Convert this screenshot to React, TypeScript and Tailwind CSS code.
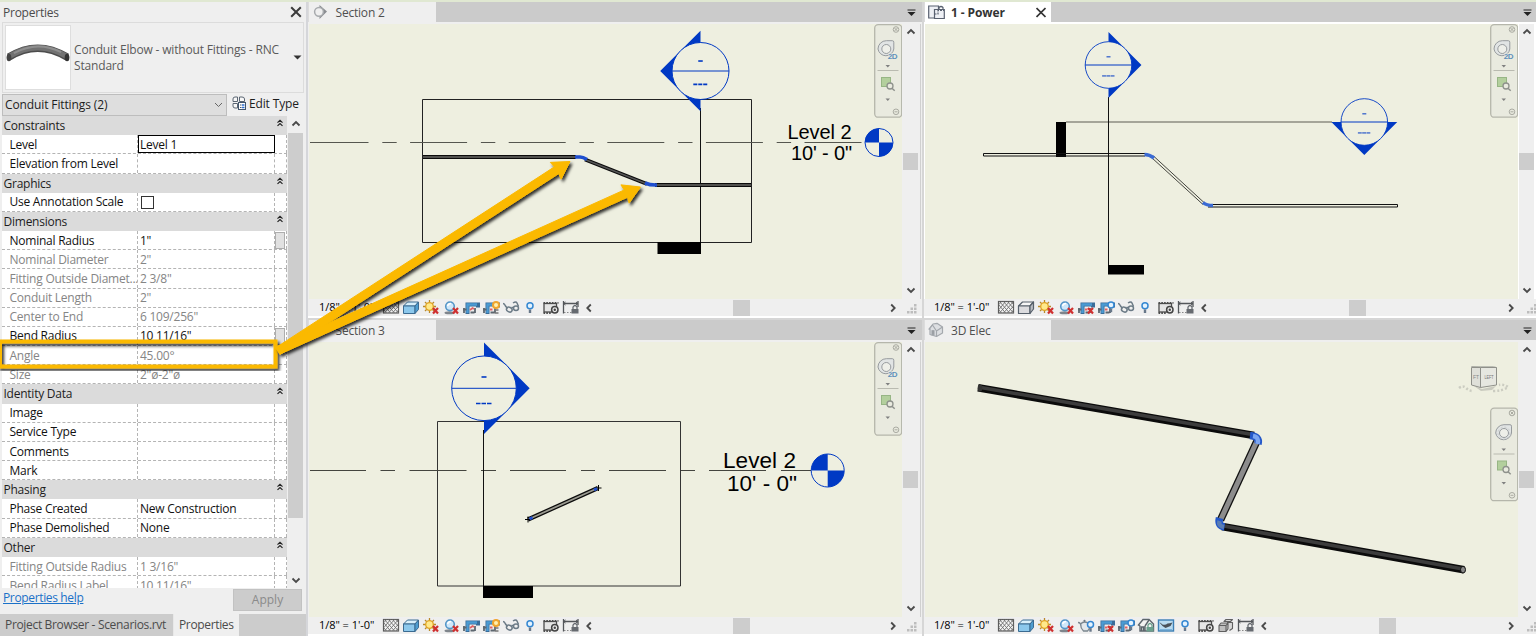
import React from "react";

type Dir = "left" | "right" | "down";
const BLUE = "#0039c4";
const PAPER = "#eeefe0";

/* ---------- property palette ---------- */

type Row =
  | { kind: "group"; name: string }
  | { kind: "prop"; name: string; value?: string; dim?: boolean; button?: boolean; check?: boolean; active?: boolean };

const rows: Row[] = [
  { kind: "group", name: "Constraints" },
  { kind: "prop", name: "Level", value: "Level 1", active: true },
  { kind: "prop", name: "Elevation from Level" },
  { kind: "group", name: "Graphics" },
  { kind: "prop", name: "Use Annotation Scale", check: true },
  { kind: "group", name: "Dimensions" },
  { kind: "prop", name: "Nominal Radius", value: '1"', button: true },
  { kind: "prop", name: "Nominal Diameter", value: '2"', dim: true },
  { kind: "prop", name: "Fitting Outside Diamet...", value: '2 3/8"', dim: true },
  { kind: "prop", name: "Conduit Length", value: '2"', dim: true },
  { kind: "prop", name: "Center to End", value: '6 109/256"', dim: true },
  { kind: "prop", name: "Bend Radius", value: '10 11/16"', button: true },
  { kind: "prop", name: "Angle", value: "45.00°", dim: true },
  { kind: "prop", name: "Size", value: '2"ø-2"ø', dim: true },
  { kind: "group", name: "Identity Data" },
  { kind: "prop", name: "Image" },
  { kind: "prop", name: "Service Type" },
  { kind: "prop", name: "Comments" },
  { kind: "prop", name: "Mark" },
  { kind: "group", name: "Phasing" },
  { kind: "prop", name: "Phase Created", value: "New Construction" },
  { kind: "prop", name: "Phase Demolished", value: "None" },
  { kind: "group", name: "Other" },
  { kind: "prop", name: "Fitting Outside Radius", value: '1 3/16"', dim: true },
  { kind: "prop", name: "Bend Radius Label", value: '10 11/16"', dim: true },
];

function Chevron({ d, className = "" }: { d: "up" | "down" | "left" | "right"; className?: string }) {
  const path = {
    up: "M1.5 6.5 5 3l3.5 3.5",
    down: "M1.5 3.5 5 7l3.5-3.5",
    left: "M6.8 1.5 3.3 5l3.5 3.5",
    right: "M3.2 1.5 6.7 5 3.2 8.5",
  }[d];
  return (
    <svg width="10" height="10" viewBox="0 0 10 10" className={"shrink-0 " + className}>
      <path d={path} fill="none" stroke="#4a4a4a" strokeWidth="1.8" />
    </svg>
  );
}

function PropertyRow({ row }: { row: Row }) {
  if (row.kind === "group") {
    return (
      <div className="flex h-[19.18px] shrink-0 items-center justify-between bg-[#dbdbdb] pl-[1.5px] pr-[3.5px] text-[#1d1d1d]">
        <span className="pt-px">{row.name}</span>
        <svg width="8" height="8" viewBox="0 0 8 8" className="mb-[5px]">
          <path d="M1.5 3.6 4 1.3l2.500 2.300M1.500 6.900 4 4.600 6.500 6.900" fill="none" stroke="#222" strokeWidth="1.200" />
        </svg>
      </div>
    );
  }
  const tone = row.dim ? "text-[#858585]" : "text-[#111111]";
  return (
    <div className={"flex h-[19.18px] shrink-0 border-b border-dashed border-[#b4b4b4] bg-white " + tone}>
      <div className="flex w-[136px] items-center overflow-hidden border-r border-dashed border-[#b4b4b4] pl-[7.5px] pt-px">{row.name}</div>
      <div
        className={
          "flex w-[137px] items-center pt-px " + (row.active ? "border border-black pl-px" : "border-r border-dashed border-[#b4b4b4] pl-[2px]")
        }
      >
        {row.check ? <span className="ml-[0.5px] size-[13px] border border-[#333] bg-white" /> : row.value}
      </div>
      <div className="flex flex-1 border-r border-dashed border-[#b4b4b4]">
        {row.button && <span className="mt-px h-[17px] w-[10px] border border-[#adadad] bg-[#e1e1e1]" />}
      </div>
    </div>
  );
}

function PropertiesPanel() {
  return (
    <aside className="flex w-[308px] shrink-0 flex-col border-r-2 border-[#d5d6da] bg-[#efefef] text-[12px] leading-[16px] tracking-[-0.24px] text-[#1d1d1d]">
      <div className="flex h-[20px] items-center justify-between pl-[3px] pr-[4px]">
        <span className="pt-px text-[#4b4b4b]">Properties</span>
        <svg width="12" height="12" viewBox="0 0 12 12">
          <path d="M1.2 1.2 10.8 10.8M10.8 1.2 1.2 10.8" stroke="#3c3c3c" strokeWidth="2" />
        </svg>
      </div>
      <div className="ml-[2px] mr-[2px] flex h-[71px] items-center border border-[#dcdcdc]">
        <div className="ml-[2px] flex h-[65px] w-[66px] items-center border border-[#dedede] bg-white">
          <svg width="65" height="63" viewBox="0 0 65 63">
            <path d="M3 31Q32 13 62 31" fill="none" stroke="#4c4c4c" strokeWidth="7.500" />
            <path d="M3 30.500Q32 12.500 62 30.500" fill="none" stroke="#727272" strokeWidth="5.500" />
            <path d="M8 27Q32 14 56 26" fill="none" stroke="#8f8f8f" strokeWidth="2" />
            <ellipse cx="3" cy="31.500" rx="2.400" ry="3.900" fill="#444" />
            <ellipse cx="62" cy="31.500" rx="2.400" ry="3.900" fill="#333" />
          </svg>
        </div>
        <div className="ml-[3px] flex-1 whitespace-nowrap pt-px tracking-[-0.17px] text-[#5a5a5a]">
          Conduit Elbow - without Fittings - RNC
          <br />
          Standard
        </div>
        <svg width="9" height="5" viewBox="0 0 9 5" className="mr-[1px]">
          <path d="M.5.5h8L4.5 4.5Z" fill="#333" />
        </svg>
      </div>
      <div className="flex h-[23px] items-center">
        <div className="ml-[2px] flex h-[22px] w-[225px] items-center justify-between border border-[#bdbdbd] bg-[#dedede] pl-[2px] pr-[3px]">
          <span className="tracking-[-0.12px]">Conduit Fittings (2)</span>
          <svg width="9" height="6" viewBox="0 0 9 6">
            <path d="M1 1l3.5 3.5L8 1" fill="none" stroke="#666" />
          </svg>
        </div>
        <svg width="14" height="14" viewBox="0 0 14 14" className="mb-[3px] ml-[5px] mr-[3px]">
          <g fill="#f7f7f7" stroke="#5b6673">
            <path d="M1 3q0-2 2-2h2.500v4.500H1ZM7.500 5.500V1h2.500q2.500 0 2.500 2v2.500ZM1 7.500h4.500V12H3q-2 0-2-2Z" />
          </g>
          <rect x="6.500" y="6.500" width="7" height="7" fill="#fff" stroke="#44566c" />
          <path d="M8 9h1.500M8 11.500h1.500" stroke="#44566c" />
          <path d="M10 9h2.500M10 11.500h2.500" stroke="#2e6fd0" strokeWidth="1.500" />
        </svg>
        <span className="mb-[2px] whitespace-nowrap tracking-[-0.15px]">Edit Type</span>
      </div>
      <div className="ml-[2px] flex h-[472px] shrink-0 overflow-hidden">
        <div className="flex h-full w-[285px] flex-col overflow-hidden whitespace-nowrap">
          {rows.map((r) => (
            <PropertyRow key={r.name} row={r} />
          ))}
        </div>
        <div className="ml-px flex w-[15px] flex-col items-center justify-between">
          <Chevron d="up" className="mt-[3px]" />
          <div className="mt-[4px] h-[385px] w-full bg-[#cdcdcd]" />
          <div className="flex-1" />
          <Chevron d="down" className="mb-[3px]" />
        </div>
      </div>
      <div className="flex h-[26px] shrink-0 items-start justify-between pl-[3px] pr-[4px]">
        <a className="mt-[2px] tracking-[-0.35px] text-[#1b71c8] underline">Properties help</a>
        <div className="mt-[1px] flex h-[22px] w-[69px] items-center justify-center border border-[#c2c2c2] bg-[#cccccc] tracking-normal text-[#8a8a8a]">
          Apply
        </div>
      </div>
      <div className="flex h-[22px] shrink-0 bg-[#cccccc] text-[#4b4b4b]">
        <div className="flex w-[174px] items-center whitespace-nowrap border-r border-[#e8e8e8] pl-[5px] tracking-[-0.33px]">
          Project Browser - Scenarios.rvt
        </div>
        <div className="flex w-[65px] items-center bg-[#efefef] pl-[5px] tracking-[-0.35px]">Properties</div>
      </div>
    </aside>
  );
}

/* ---------- view control bar icons ---------- */

const RedX = () => <path d="M11 8 16 13.500M16 8 11 13.500" stroke="#cf3030" strokeWidth="2.200" />;
const CropFrame = () => (
  <>
    <path d="M5.500 14V4.500H16v3" fill="none" stroke="#3a6d99" strokeWidth="4" />
    <path d="M5.500 13V4.500h9.500" fill="none" stroke="#4b9bd3" strokeWidth="2.400" />
    <path d="M1 9.500h3.500M2 8v5M8.500 12.500h4M13 8v5" fill="none" stroke="#5d6770" strokeWidth="1.800" />
  </>
);
const Bulb = ({ x, y }: { x: number; y: number }) => (
  <g>
    <circle cx={x} cy={y} r="3" fill="#e4f3ff" stroke="#3587d2" strokeWidth="1.500" />
    <path d={`M${x - 1.2} ${y + 3.6}h2.4v3.6h-2.4z`} fill="#68788a" />
  </g>
);
const Lock = ({ x, y, c }: { x: number; y: number; c: string }) => (
  <g>
    <path d={`M${x + 1.5} ${y}v-2q2-3 4 0v2`} fill="none" stroke={c} strokeWidth="1.300" />
    <rect x={x} y={y} width="7" height="4.500" fill={c} />
  </g>
);

const icons: Record<string, React.ReactNode> = {
  mesh: (
    <>
      <rect x="1.500" y="1.500" width="15" height="11.500" fill="#f4f4f4" stroke="#5b5b5b" strokeWidth="1.200" />
      <path
        d="M2 4.500l2.500-3M2 9.500l6.500-8M2.500 13l10-11.500M6.500 13l10-11.500M10.500 13l6-7M14 13l2.500-3M2 10l2.500 3M2 5l6.500 8M2.500 1.500l10 11.500M6.500 1.500l10 11.500M10.500 1.500l6 7M14 1.500l2.500 3"
        fill="none"
        stroke="#707070"
        strokeWidth=".9"
      />
    </>
  ),
  boxBlue: (
    <g strokeLinejoin="round" stroke="#3b6b91">
      <path d="M1.500 6 5.500 2h11L13 6Z" fill="#d9f0fb" />
      <path d="M1.500 6H13v7.500H1.500Z" fill="#8cc8ec" />
      <path d="M13 6l3.500-4v7.500L13 13.500Z" fill="#4e9dd0" />
    </g>
  ),
  boxGray: (
    <g strokeLinejoin="round" stroke="#56606b" strokeWidth="1.200">
      <path d="M1.500 6 5.500 2h11L13 6Z" fill="#f6f6f6" />
      <path d="M1.500 6H13v7.500H1.500Z" fill="#dcdcdf" />
      <path d="M13 6l3.500-4v7L13 13.500Z" fill="#b9bcc2" />
    </g>
  ),
  sun: (
    <>
      <path d="M7.500 0v13M1 6.500h13M3 2l9 9M12 2 3 11" stroke="#b98a2a" strokeWidth="1.300" />
      <circle cx="7.500" cy="6.500" r="3.800" fill="#ffe98a" stroke="#e0a325" strokeWidth="1.300" />
      <RedX />
    </>
  ),
  shadow: (
    <>
      <ellipse cx="7.500" cy="12.800" rx="5" ry="1.500" fill="#7f858c" />
      <circle cx="8" cy="6.300" r="4.300" fill="#cfe7fa" stroke="#5596c8" strokeWidth="1.600" />
      <path d="M5.500 6q1-2.500 3.500-2.500" stroke="#fff" strokeWidth="1.400" fill="none" />
      <RedX />
    </>
  ),
  crop: (
    <>
      <CropFrame />
      <path d="M8 10l2.500-2 1.500 1" fill="none" stroke="#e26161" strokeWidth="1.800" />
    </>
  ),
  cropX: (
    <>
      <CropFrame />
      <RedX />
      <path d="M8 9.500h2.500" stroke="#e26161" strokeWidth="2" />
    </>
  ),
  cropSun: (
    <>
      <CropFrame />
      <path d="M8 9.500h2.500" stroke="#e26161" strokeWidth="2" />
      <circle cx="14" cy="5" r="3" fill="#fff1b0" stroke="#f0a52e" strokeWidth="2" />
      <path d="M12.500 10h4M12.500 13h4" stroke="#777" strokeWidth="1.500" />
    </>
  ),
  cropBulb: (
    <>
      <CropFrame />
      <path d="M8 9.500h2.500" stroke="#e26161" strokeWidth="2" />
      <Bulb x={14} y={5} />
    </>
  ),
  glasses: (
    <g fill="none" stroke="#6b7a86" strokeWidth="1.500">
      <path d="M1 3.500q1.500 0 2.500 2.500l2 2.500M9.500 7.500l2.500 0M11 3q3-2 4 0l1.500 3.500" />
      <ellipse cx="7.300" cy="9.600" rx="2.900" ry="2.300" transform="rotate(25 7.300 9.600)" />
      <ellipse cx="14" cy="8.300" rx="2.500" ry="2.200" />
    </g>
  ),
  bulb: <Bulb x={8} y={5.8} />,
  film: (
    <>
      <rect x="2" y="3.500" width="12.500" height="8.500" fill="#e5e5e5" stroke="#4c4c4c" strokeWidth="1.300" />
      <path d="M1.500 2.800h15M1.500 13h8" stroke="#4c4c4c" strokeWidth="1.800" strokeDasharray="1.600 1.200" />
      <circle cx="12.800" cy="9.800" r="3.200" fill="#ececec" stroke="#444" strokeWidth="1.500" />
      <circle cx="12.800" cy="9.800" r="1.200" fill="#444" />
    </>
  ),
  dimLock: (
    <>
      <path d="M1.500 1v12.500M16 1v6M1.500 3.500H16" stroke="#53565a" strokeWidth="1.300" />
      <path d="M3.500 2 1.500 3.500l2 1.500M14 2l2 1.500L14 5" stroke="#53565a" fill="none" />
      <path d="M2 12.500h8" stroke="#888" strokeDasharray="1.500 1.500" />
      <Lock x={9.5} y={9} c="#666a70" />
    </>
  ),
  teapot: (
    <>
      <path d="M1 4.500q3 0 3 4M3.500 6q4-4 9 0 1 4-2 7H6.500q-3-3-3-7Z" fill="#e3e8eb" stroke="#7b878f" strokeWidth="1.300" />
      <circle cx="7.500" cy="2.800" r="1.100" fill="#6b7880" />
      <Bulb x={13.5} y={6.5} />
    </>
  ),
  houseLock: (
    <>
      <path d="M1.500 7 6 1.500h6L16.500 6v7H3V8Z" fill="#f2f2f2" stroke="#5c656c" strokeWidth="1.400" />
      <path d="M8 8l4-6M8 8v5M4.500 13V9h2v4" stroke="#5c656c" fill="none" strokeWidth="1.400" />
      <Lock x={9.5} y={9} c="#6aa08d" />
    </>
  ),
  picture: (
    <>
      <rect x="1.500" y="2" width="15" height="11" fill="#b9dcf2" stroke="#3c7fb5" strokeWidth="1.400" />
      <path d="M2.500 4.500q1 0 3 2 3 1 5-1 2 0 5-1l-2 3.500-5 2-3-2Z" fill="#4a525a" />
      <path d="M3 11.500h12" stroke="#7cb4dc" />
    </>
  ),
  blocks: (
    <g stroke="#606060" strokeWidth="1.100" strokeLinejoin="round">
      <path d="M7 3.500l2-2h6.500L13.500 3.500ZM10 4.500h5.500v6l-3 2" fill="#d8d8d8" />
      <path d="M2 7.500 4 5h7L9 7.500ZM2 7.500h7v6H2ZM9 7.500 11 5v6l-2 2.500Z" fill="#bfbfbf" />
    </g>
  ),
};

const sectionIcons = ["mesh", "boxBlue", "sun", "shadow", "crop", "cropSun", "glasses", "bulb", "film", "dimLock"];
const planIcons = ["mesh", "boxGray", "sun", "shadow", "cropX", "cropBulb", "glasses", "bulb", "film", "dimLock"];
const modelIcons = ["mesh", "boxBlue", "sun", "shadow", "teapot", "cropX", "cropBulb", "houseLock", "picture", "bulb", "film", "blocks", "dimLock"];

/* ---------- drawing symbols ---------- */

function SectionMark({ x, y, r, dir, len = 4.5 }: { x: number; y: number; r: number; dir: Dir; len?: number }) {
  const R = r * Math.SQRT2;
  const angle = { left: 0, right: 180, down: -90 }[dir];
  const big = r > 25;
  return (
    <g>
      <g transform={`translate(${x} ${y}) rotate(${angle})`}>
        <path fillRule="evenodd" fill={BLUE} d={`M0 ${-R}L${-R} 0L0 ${R}ZM0 ${-r}A${r} ${r} 0 0 0 0 ${r}Z`} />
        <circle r={r} fill="none" stroke={BLUE} strokeWidth={big ? 1 : 0.9} />
      </g>
      <path d={`M${x - r} ${y}h${2 * r}`} stroke={BLUE} strokeWidth="1" />
      <path d={`M${x - len / 2} ${y - r * 0.35}h${len}`} stroke={BLUE} strokeWidth={big ? 1.6 : 1} />
      <path
        d={`M${x - len * 1.6} ${y + r * 0.47}h${len * 3.1}`}
        stroke={BLUE}
        strokeWidth={big ? 1.6 : 1}
        strokeDasharray={big ? `${len * 0.9} ${len * 0.2}` : `${len * 0.97} ${len * 0.1}`}
      />
    </g>
  );
}

function LevelHead({ x, y, r }: { x: number; y: number; r: number }) {
  return (
    <g>
      <circle cx={x} cy={y} r={r} fill={PAPER} stroke={BLUE} />
      <path fill={BLUE} d={`M${x} ${y}V${y - r}A${r} ${r} 0 0 0 ${x - r} ${y}ZM${x} ${y}V${y + r}A${r} ${r} 0 0 0 ${x + r} ${y}Z`} />
    </g>
  );
}

const drawingFont = "Liberation Sans, Arial, sans-serif";

function NavBar({ x, y, flat = true }: { x: number; y: number; flat?: boolean }) {
  return (
    <g transform={`translate(${x} ${y})`} fill="none">
      <rect x=".7" y=".7" width="27" height="92.500" rx="3.500" fill="#e9eadf" stroke="#b5b6ab" strokeWidth="1.300" />
      <g stroke="#aaaba2">
        <circle cx="22" cy="5.500" r="2.800" />
        <path d="M20.500 4l3 3M23.500 4l-3 3" />
        <circle cx="22" cy="87.800" r="2.800" />
        <path d="M20.500 87.800h3" />
      </g>
      <g transform={flat ? "translate(12.300 25)" : "translate(14 25.500)"}>
        <path d="M-8.300 0A8.300 8.300 0 0 1 0-8.300h6q1.500 0 1.500 1.500V0A8 8 0 0 1-8.300 0Z" fill="#e1e4e4" stroke="#979b9e" />
        <circle r="4.500" fill="#eeefe9" stroke="#979b9e" />
        {!flat && <circle r="6" stroke="#c9cccc" strokeDasharray="2 2" />}
      </g>
      {flat && (
        <>
          <rect x="14" y="29.500" width="9.500" height="6" fill="#e9eadf" />
          <text x="13.700" y="35.200" fill="#5f90bb" fontSize="8" fontWeight="bold" fontFamily={drawingFont} letterSpacing="-0.5">
            2D
          </text>
        </>
      )}
      <path d="M11.500 41h4.500l-2.200 2.500ZM11.500 74.500h4.500l-2.200 2.500Z" fill="#808080" />
      <path d="M3.500 46.500h21" stroke="#b9bab0" />
      <rect x="7.500" y="53.500" width="9" height="9" fill="#b3cf9d" stroke="#97b585" />
      <circle cx="16" cy="62" r="3" fill="#e9eadf" stroke="#8e918c" strokeWidth="1.300" />
      <path d="M18 64.300l2.700 2.500" stroke="#8e918c" strokeWidth="1.500" />
    </g>
  );
}

function Pipe({ x1, y1, x2, y2, w, mid }: { x1: number; y1: number; x2: number; y2: number; w: number; mid: string }) {
  return (
    <g>
      <line x1={x1} y1={y1} x2={x2} y2={y2} stroke="#0b0b0b" strokeWidth={w} />
      <line x1={x1} y1={y1} x2={x2} y2={y2} stroke={mid} strokeWidth={w * 0.42} />
    </g>
  );
}

function Section2() {
  return (
    <svg width="593" height="275" viewBox="309 24 593 275">
      <path d="M422.500 99.500h329v143h-329Z" fill="none" stroke="#222" />
      <path d="M311.500 142.500H865" stroke="#55564f" strokeDasharray="57 13.800 14.400 13.400" />
      <path d="M310 142.500h3" stroke="#55564f" />
      <path d="M700.500 108v135" stroke="#111" />
      <Pipe x1={423} y1={157} x2={576} y2={157} w={4} mid="#6a6a66" />
      <Pipe x1={585} y1={159.5} x2={647} y2={184} w={3.6} mid="#555" />
      <Pipe x1={655} y1={185} x2={751} y2={185} w={4} mid="#6a6a66" />
      <path d="M575 157h5q3 0 7 2.500M645 183q5 2.200 12 2" fill="none" stroke="#1f4fcf" strokeWidth="3.600" />
      <rect x="657.500" y="242" width="43.500" height="12" fill="#000" />
      <SectionMark x={700.5} y={71} r={28.5} dir="left" />
      <text x="787.500" y="139.200" fontSize="20" fontFamily={drawingFont} textLength="64" letterSpacing="0">Level 2</text>
      <text x="791" y="160" fontSize="20" fontFamily={drawingFont} textLength="61" letterSpacing="0">10' - 0"</text>
      <LevelHead x={879} y={142.5} r={14} />
      <NavBar x={874} y={24} />
    </svg>
  );
}

function Power() {
  return (
    <svg width="593" height="275" viewBox="925 24 593 275">
      <path d="M1066 122H1332" stroke="#8d8d82" strokeWidth="1.500" />
      <path d="M1108.500 97v169" stroke="#111" />
      <rect x="1056" y="122" width="10" height="35" />
      <rect x="1108" y="265" width="36" height="9.500" />
      <path d="M1145 153.500H983.500v2.500H1145M1208 204.500h189.500v2.500H1208" fill="none" stroke="#111" />
      <path d="M1153.500 156 1204 202.500M1151.500 157.500l51.500 47" stroke="#44443e" fill="none" />
      <path d="M1144.500 154.500q5 0 9.500 3.500M1203 202.500q3.500 3 10 3" fill="none" stroke="#3a6ad4" strokeWidth="3.500" />
      <SectionMark x={1108.5} y={65} r={23.3} dir="right" len={4} />
      <SectionMark x={1364.3} y={122} r={23.3} dir="down" len={4} />
      <NavBar x={1490} y={24} />
    </svg>
  );
}

function Section3() {
  return (
    <svg width="593" height="275" viewBox="309 342 593 275">
      <path d="M437.500 421.500h243v164.500h-243Z" fill="none" stroke="#333" />
      <path
        d="M310 470.500H366M380.500 470.500h14.500M409.500 470.500h57M481 470.500h15M510 470.500h56M581 470.500h14M609 470.500h57M681 470.500h14M709 470.500h57M781 470.500h30"
        stroke="#44453f"
      />
      <path d="M483.500 430v156" stroke="#111" />
      <Pipe x1={528} y1={519.5} x2={598} y2={488} w={4.3} mid="#9a9a90" />
      <path d="M525 519.500h6M528 516.500v6M595.500 488h6M598.500 485v6" stroke="#000" />
      <path d="M529.500 519l3-1.500M594 490l3-1.500" stroke="#1f4fcf" strokeWidth="3" />
      <rect x="483" y="586" width="50" height="12" />
      <SectionMark x={484} y={388.3} r={32.3} dir="right" len={5} />
      <text x="723" y="467.500" fontSize="22.500" fontFamily={drawingFont} textLength="73" letterSpacing="0">Level 2</text>
      <text x="727" y="490.500" fontSize="22.500" fontFamily={drawingFont} textLength="70" letterSpacing="0">10' - 0"</text>
      <LevelHead x={827.7} y={470.5} r={16.5} />
      <NavBar x={874} y={342} />
    </svg>
  );
}

function ModelView() {
  return (
    <svg width="593" height="275" viewBox="925 342 593 275">
      <g fill="none">
        <path d="M978 387.700 1254 435.500M1222 526.500l242 43.300" stroke="#0b0b0b" strokeWidth="7.600" />
        <path d="M978 387 1254 434.800M1224 526l239 43" stroke="#3c3c3c" strokeWidth="3.500" />
        <path d="M1257 441 1220.500 520" stroke="#111" strokeWidth="7.600" />
        <path d="M1257 441 1220.500 520" stroke="#8c8c8c" strokeWidth="5" />
        <path d="M1250 435.500q10 1 8 8.500" stroke="#2458c9" strokeWidth="7.500" />
        <path d="M1253 436q6.500 1 4.500 8" stroke="#7ba6f2" strokeWidth="4.500" />
        <path d="M1219.500 518q-2 8 5 9" stroke="#2458c9" strokeWidth="7.500" />
        <path d="M1219.500 521q-1.500 5 4.500 6" stroke="#5a7db4" strokeWidth="4.500" />
      </g>
      <ellipse cx="980" cy="388" rx="2.300" ry="3.600" fill="#333" />
      <ellipse cx="1463" cy="569.700" rx="2.500" ry="3.300" fill="#888" stroke="#111" />
      <g>
        <path d="M1459 388q4-3 7 0t7 3M1493 391q10 0 15-4-4-3-9-2" fill="none" stroke="#cbccc1" strokeWidth="2.500" strokeDasharray="2 2" />
        <path d="M1474 386l8 3 14-3-4 4-11 1Z" fill="#c9cabf" />
        <path d="M1471.500 366.500h22l3 1h-16Z" fill="#f0f1ea" stroke="#a5a69f" strokeWidth=".7" />
        <path d="M1471.500 367.500h9v20l-9-2.500Z" fill="#dfe0d9" stroke="#8f908a" />
        <path d="M1480.500 367.500h16v17.500l-16 2.500Z" fill="#e6e7e0" stroke="#8f908a" />
        <text x="1473" y="379" fontSize="5" fill="#888" fontFamily={drawingFont} textLength="6">FT</text>
        <text x="1484.500" y="379" fontSize="5.500" fill="#777" fontFamily={drawingFont} textLength="9" lengthAdjust="spacingAndGlyphs">LEFT</text>
      </g>
      <NavBar x={1490} y={407.5} flat={false} />
    </svg>
  );
}

/* ---------- view windows ---------- */

type TabIcon = "section" | "sheet" | "house";

function TabGlyph({ kind }: { kind: TabIcon }) {
  return (
    <svg width="18" height="16" viewBox="0 0 18 16" className="shrink-0">
      {kind === "section" && (
        <>
          <path d="M6.500 1 14 7.500 6.500 15Z" fill="#8a8d91" />
          <circle cx="6" cy="7.800" r="4.400" fill="#efefef" stroke="#a7aaad" strokeWidth="1.500" />
        </>
      )}
      {kind === "sheet" && (
        <g fill="#eef0f5" stroke="#596170" strokeWidth="1.200">
          <path d="M.7 2h9.800v12H.7Z" />
          <path d="M6.500 5.500h9.800v9H6.500Z" />
          <path d="M6.500 10h3.500V6.500h6" strokeDasharray="2 1" fill="none" />
          <path d="M11 5.500v-2q2-2 4 0v2" fill="none" />
        </g>
      )}
      {kind === "house" && (
        <g fill="#dddfe2" stroke="#a4a8ad" strokeWidth="1.200" strokeLinejoin="round">
          <path d="M1 7 5 2l4-.7L14.500 5v6L8.500 14.500 2 12.500V7Z" />
          <path d="M1 7.500 4.500 3l4 6L14.500 5M8.500 9v5.500" fill="none" />
          <path d="M4 8.500h2v4.500H4Z" fill="#8e9297" />
        </g>
      )}
    </svg>
  );
}

interface ViewProps {
  title: string;
  icon: TabIcon;
  active?: boolean;
  right?: boolean;
  barIcons: string[];
  thumbGap: string;
  thumbTop: string;
  children: React.ReactNode;
}

function ViewWindow({ title, icon, active, right, barIcons, thumbGap, thumbTop, children }: ViewProps) {
  return (
    <section className={"flex h-[318px] shrink-0 flex-col bg-[#efefef] " + (right ? "w-[612px]" : "w-[614px]")}>
      <div className="flex h-[20px] shrink-0 bg-[#cbcbcb]">
        <div
          className={
            "flex items-center border-l border-[#dcdcdc] " +
            (right ? "w-[127px] pl-[3px] " : "w-[128px] pl-[4px] ") +
            (active ? "bg-white font-bold text-[#333]" : "bg-[#efefef] text-[#4f4f4f]")
          }
        >
          <TabGlyph kind={icon} />
          <span className={(right ? "ml-[5px] " : "ml-[4.5px] ") + (active ? "" : "tracking-[-0.2px] ") + "flex-1 whitespace-nowrap pt-[1.5px]"}>{title}</span>
          {active && (
            <svg width="10" height="11" viewBox="0 0 10 11" className="mr-[5px]">
              <path d="M.5 1 9.500 10M9.500 1 .5 10" stroke="#333" strokeWidth="1.700" />
            </svg>
          )}
        </div>
        <div className="flex flex-1 items-center justify-end">
          <svg width="9" height="7" viewBox="0 0 9 7" className={right ? "mr-[4px]" : "mr-[6px]"}>
            <path d="M.5 1h8" stroke="#555" strokeWidth="1.400" />
            <path d="M.5 3h8L4.500 7Z" fill="#222" />
          </svg>
        </div>
      </div>
      <div className={"flex h-[277px] shrink-0 pl-px pt-[2px] " + (active ? "bg-white" : "")}>
        <div className="w-[593px] shrink-0 overflow-hidden bg-[#eeefe0]">{children}</div>
        <div className="ml-px flex w-[15px] flex-col items-center bg-[#efefef] pt-[3px]">
          <Chevron d="up" />
          <div className={"h-[17px] w-full bg-[#cdcdcd] " + thumbTop} />
          <div className="flex-1" />
          <Chevron d="down" className="mb-[4px]" />
        </div>
        {!right && <div className="ml-[2px] w-px bg-[#d0d0d0]" />}
      </div>
      <div className={"flex h-[17px] shrink-0 items-center bg-[#efefef] " + (right ? "pl-[10px]" : "pl-[11px]")}>
        <span className="w-[62.5px] shrink-0 whitespace-nowrap text-[11px] tracking-[-0.05px] text-black">1/8" = 1'-0"</span>
        {barIcons.map((name) => (
          <svg key={name} width="20" height="16" viewBox="0 0 20 16" className="shrink-0">
            {icons[name]}
          </svg>
        ))}
        <Chevron d="left" className="ml-[2px]" />
        <div className={"h-[16px] w-[17px] bg-[#cdcdcd] " + thumbGap} />
        <div className="flex-1" />
        <Chevron d="right" className={right ? "mr-[11px]" : "mr-[9px]"} />
        <svg width="10" height="10" viewBox="0 0 10 10" className={"mt-[3px] " + (right ? "-mr-[1px]" : "mr-[5px]")}>
          <path fill="#bdbdbd" d="M0 7h2.500v2.500H0ZM3.500 7H6v2.500H3.500ZM7 7h2.500v2.500H7ZM3.500 3.500H6V6H3.500ZM7 3.500h2.500V6H7ZM7 0h2.500v2.500H7Z" />
        </svg>
      </div>
      <div className="flex flex-1 flex-col justify-end bg-white">
        <div className="h-[2px] bg-[#d6d6d6]" />
      </div>
    </section>
  );
}

/* ---------- callout ---------- */

function arrow(x1: number, y1: number, x2: number, y2: number) {
  const len = Math.hypot(x2 - x1, y2 - y1);
  const ux = (x2 - x1) / len;
  const uy = (y2 - y1) / len;
  const p = (along: number, side: number) => `${x1 + ux * along - uy * side} ${y1 + uy * along + ux * side}`;
  return `M${p(0, -4)}L${p(len - 16, -4)}L${p(len - 17, -10)}L${p(len, 0)}L${p(len - 17, 10)}L${p(len - 16, 4)}L${p(0, 4)}Z`;
}

function Callout() {
  return (
    <svg className="pointer-events-none absolute left-0 top-0" width="1536" height="636" viewBox="0 0 1536 636">
      <defs>
        <filter id="soft" x="-5%" y="-10%" width="110%" height="125%">
          <feDropShadow dx="2" dy="2.500" stdDeviation="1.500" floodColor="#000" floodOpacity=".8" />
        </filter>
      </defs>
      <g filter="url(#soft)">
        <rect x="0" y="341.500" width="275.500" height="25" fill="none" stroke="#fbb900" strokeWidth="4" />
      </g>
      <g filter="url(#soft)" fill="#fbb900" stroke="#fbb900" strokeWidth="1" strokeLinejoin="round">
        <path d={arrow(278, 351, 570, 161.5)} />
        <path d={arrow(278, 350.5, 640.5, 187)} />
      </g>
    </svg>
  );
}

export default function App() {
  return (
    <div className="relative flex h-[636px] w-[1536px] flex-col overflow-hidden bg-[#efefef] font-['Open_Sans','Noto_Sans',sans-serif] text-[12px] tracking-[-0.1px]">
      <div className="h-[2px] shrink-0 bg-[#e0e8d2]" />
      <div className="flex h-[634px]">
        <PropertiesPanel />
        <main className="flex w-[1228px] flex-wrap content-start gap-x-[2px] bg-[#d6d6d6]">
          <ViewWindow title="Section 2" icon="section" barIcons={sectionIcons} thumbTop="mt-[116px]" thumbGap="ml-[139px]">
            <Section2 />
          </ViewWindow>
          <ViewWindow title="1 - Power" icon="sheet" active right barIcons={planIcons} thumbTop="mt-[116px]" thumbGap="ml-[140px]">
            <Power />
          </ViewWindow>
          <ViewWindow title="Section 3" icon="section" barIcons={sectionIcons} thumbTop="mt-[116px]" thumbGap="ml-[139px]">
            <Section3 />
          </ViewWindow>
          <ViewWindow title="3D Elec" icon="house" right barIcons={modelIcons} thumbTop="mt-[116px]" thumbGap="ml-[110px]">
            <ModelView />
          </ViewWindow>
        </main>
      </div>
      <Callout />
    </div>
  );
}
